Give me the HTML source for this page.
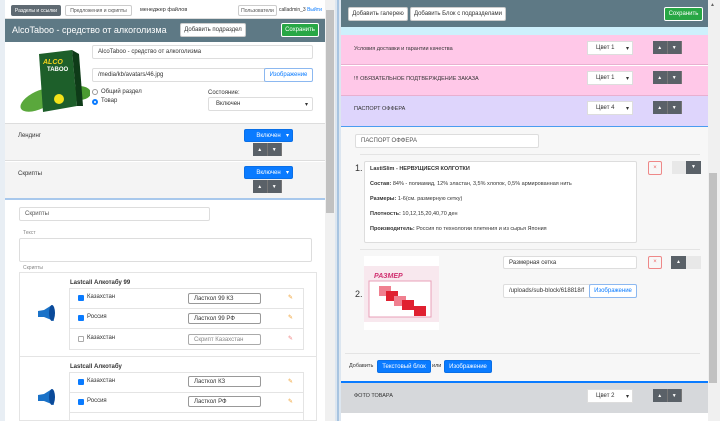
<!DOCTYPE html><html><head><meta charset="utf-8"><style>
*{box-sizing:border-box;margin:0;padding:0}
body{width:720px;height:421px;overflow:hidden;background:#f0f0f0;font-family:"Liberation Sans","DejaVu Sans",sans-serif;font-size:6px;color:#333;position:relative}
.a{position:absolute}
.btn{position:absolute;border:1px solid #ccc;background:#fff;font-size:6px;display:flex;align-items:center;justify-content:center;border-radius:2px;white-space:nowrap}
.inp{position:absolute;border:1px solid #ddd;background:#fff;font-size:6px;display:flex;align-items:center;padding-left:5px;border-radius:2px;white-space:nowrap;overflow:hidden}
.blue{background:#0a7bff;color:#fff;border-color:#0a6fe6}
.ud{position:absolute;width:29px;height:13px;display:flex}
.ud span{flex:1;background:#5a6168;color:#fff;font-size:5px;display:flex;align-items:center;justify-content:center;border-right:1px solid #777}
.sel{position:absolute;width:46px;height:14px;background:#fff;border:1px solid #ddd;font-size:6px;display:flex;align-items:center;padding-left:8px}
.sel:after{content:"▾";position:absolute;right:3px;font-size:6px}
.cb{position:absolute;width:6px;height:6px;background:#0a7bff;border-radius:1px}
.cb0{position:absolute;width:6px;height:6px;border:1px solid #aaa;border-radius:1px;background:#fff}
.pen{position:absolute;color:#f0a030;font-size:6px}
b{font-weight:bold}
</style></head><body>
<!-- left panel -->
<div class="a" style="left:0;top:0;width:5px;height:421px;background:#e8eef4"></div>
<div class="a" style="left:5px;top:0;width:320px;height:421px;background:#fff"></div>
<div class="a" style="left:5px;top:0;width:320px;height:19px;background:#fff;border-bottom:1px solid #ddd"></div>
<div class="btn" style="left:11px;top:5px;width:50px;height:11px;background:#5f6a72;color:#fff;border-color:#5f6a72;font-size:5px">Разделы и ссылки</div>
<div class="btn" style="left:65px;top:5px;width:67px;height:11px;font-size:5px;color:#555">Предложения и скрипты</div>
<div class="a" style="left:140px;top:7px;font-size:5.5px">менеджер файлов</div>
<div class="btn" style="left:238px;top:5px;width:39px;height:11px;font-size:5px;color:#555">Пользователи</div>
<div class="a" style="left:279px;top:7px;font-size:5px">calladmin_3 <span style="color:#0a7bff">Выйти</span></div>
<div class="a" style="left:5px;top:19px;width:320px;height:23px;background:#5e7985"></div>
<div class="a" style="left:12px;top:25px;color:#fff;font-size:9px">AlcoTaboo - средство от алкоголизма</div>
<div class="btn" style="left:180px;top:23px;width:66px;height:14px;font-size:6px">Добавить подраздел</div>
<div class="btn" style="left:281px;top:23px;width:38px;height:14px;background:#28a745;color:#fff;border-color:#fff">Сохранить</div>
<!-- product image -->
<svg class="a" style="left:17px;top:48px" width="73" height="68" viewBox="0 0 73 68"><ellipse cx="22" cy="52" rx="20" ry="9" fill="#5aa83c" transform="rotate(-25 22 52)"/><ellipse cx="62" cy="45" rx="12" ry="7" fill="#4a9a30"/><polygon points="22,6 55,2 60,58 26,64" fill="#1d5f2a"/><polygon points="55,2 62,6 66,58 60,58" fill="#0e3b18"/><text x="26" y="16" font-size="7" fill="#f3d31a" font-style="italic" font-weight="bold">ALCO</text><text x="30" y="23" font-size="6" fill="#fff" font-weight="bold">TABOO</text><circle cx="42" cy="51" r="5" fill="#f3e21a"/></svg>
<div class="inp" style="left:92px;top:45px;width:221px;height:14px">AlcoTaboo - средство от алкоголизма</div>
<div class="inp" style="left:92px;top:68px;width:173px;height:14px;border-radius:2px 0 0 2px">/media/kb/avatars/46.jpg</div>
<div class="btn" style="left:264px;top:68px;width:49px;height:14px;color:#0a7bff;border-color:#8cb8f0">Изображение</div>
<div class="a" style="left:92px;top:89px;width:6px;height:6px;border:1px solid #999;border-radius:50%"></div>
<div class="a" style="left:101px;top:89px;font-size:6px">Общий раздел</div>
<div class="a" style="left:92px;top:99px;width:6px;height:6px;border:2px solid #0a7bff;border-radius:50%"></div>
<div class="a" style="left:101px;top:98px;font-size:6px">Товар</div>
<div class="a" style="left:208px;top:90px;font-size:6px">Состояние:</div>
<div class="inp" style="left:208px;top:97px;width:105px;height:14px;padding-left:7px">Включен<span style="position:absolute;right:4px">▾</span></div>
<div class="a" style="left:5px;top:123px;width:320px;height:38px;background:#f4f4f4;border-top:1px solid #ddd;border-bottom:1px solid #ddd"></div>
<div class="a" style="left:18px;top:133px;font-size:6px">Лендинг</div>
<div class="btn blue" style="left:244px;top:129px;width:49px;height:13px">Включен<span style="position:absolute;right:3px">▾</span></div>
<div class="ud" style="left:253px;top:143px"><span>▲</span><span>▼</span></div>
<div class="a" style="left:5px;top:162px;width:320px;height:37px;background:#f4f4f4;border-bottom:1px solid #ddd"></div>
<div class="a" style="left:18px;top:171px;font-size:6px">Скрипты</div>
<div class="btn blue" style="left:244px;top:166px;width:49px;height:13px">Включен<span style="position:absolute;right:3px">▾</span></div>
<div class="ud" style="left:253px;top:180px"><span>▲</span><span>▼</span></div>
<div class="a" style="left:5px;top:198px;width:320px;height:2px;background:#a8c8ec"></div>
<div class="inp" style="left:19px;top:207px;width:191px;height:14px;color:#555">Скрипты</div>
<div class="a" style="left:23px;top:230px;font-size:5px;color:#888">Текст</div>
<div class="a" style="left:19px;top:238px;width:293px;height:24px;border:1px solid #ddd;border-radius:2px"></div>
<div class="a" style="left:23px;top:265px;font-size:5px;color:#888">Скрипты</div>
<div class="a" style="left:19px;top:272px;width:298px;height:149px;border:1px solid #e4e4e4"></div>
<div class="a" style="left:19px;top:356px;width:298px;height:1px;background:#e4e4e4"></div>
<div class="a" style="left:70px;top:280px;font-size:6px;font-weight:bold">Lastcall Алкотабу 99</div>
<div class="a" style="left:70px;top:364px;font-size:6px;font-weight:bold">Lastcall Алкотабу</div>
<svg class="a" style="left:36px;top:305px" width="20" height="18"><polygon points="2,6 8,5 16,0 18,16 8,12 2,12" fill="#1a72c8"/><ellipse cx="16" cy="8" rx="3" ry="8" fill="#0a4a9a"/></svg>
<svg class="a" style="left:36px;top:389px" width="20" height="18"><polygon points="2,6 8,5 16,0 18,16 8,12 2,12" fill="#1a72c8"/><ellipse cx="16" cy="8" rx="3" ry="8" fill="#0a4a9a"/></svg>
<div class="a" style="left:69px;top:288px;width:235px;height:62px;border:1px solid #e4e4e4"></div>
<div class="a" style="left:69px;top:308px;width:235px;height:1px;background:#e4e4e4"></div>
<div class="a" style="left:69px;top:328px;width:235px;height:1px;background:#e4e4e4"></div>
<div class="a" style="left:69px;top:372px;width:235px;height:49px;border:1px solid #e4e4e4"></div>
<div class="a" style="left:69px;top:392px;width:235px;height:1px;background:#e4e4e4"></div>
<div class="a" style="left:69px;top:412px;width:235px;height:1px;background:#e4e4e4"></div>
<div class="cb" style="left:78px;top:295px"></div><div class="a" style="left:87px;top:294px">Казахстан</div>
<div class="inp" style="left:188px;top:293px;width:73px;height:11px;border-color:#999">Ласткол 99 КЗ</div><div class="pen" style="left:288px;top:294px">✎</div>
<div class="cb" style="left:78px;top:315px"></div><div class="a" style="left:87px;top:314px">Россия</div>
<div class="inp" style="left:188px;top:313px;width:73px;height:11px;border-color:#999">Ласткол 99 РФ</div><div class="pen" style="left:288px;top:314px">✎</div>
<div class="cb0" style="left:78px;top:336px"></div><div class="a" style="left:87px;top:335px">Казахстан</div>
<div class="inp" style="left:188px;top:334px;width:73px;height:11px;border-color:#aaa;color:#888">Скрипт Казахстан</div><div class="pen" style="left:288px;top:335px;color:#f08080">✎</div>
<div class="cb" style="left:78px;top:379px"></div><div class="a" style="left:87px;top:378px">Казахстан</div>
<div class="inp" style="left:188px;top:376px;width:73px;height:11px;border-color:#999">Ласткол КЗ</div><div class="pen" style="left:288px;top:378px">✎</div>
<div class="cb" style="left:78px;top:399px"></div><div class="a" style="left:87px;top:398px">Россия</div>
<div class="inp" style="left:188px;top:396px;width:73px;height:11px;border-color:#999">Ласткол РФ</div><div class="pen" style="left:288px;top:398px">✎</div>
<div class="a" style="left:325px;top:0;width:10px;height:421px;background:#f0f0f0"></div>
<div class="a" style="left:326px;top:10px;width:8px;height:203px;background:#c1c1c1"></div>
<div class="a" style="left:335px;top:0;width:6px;height:421px;background:#dce6f0"></div>
<div class="a" style="left:337px;top:0;width:2px;height:421px;background:#a8c4e0"></div>
<!-- right panel -->
<div class="a" style="left:341px;top:0;width:367px;height:421px;background:#fff"></div>
<div class="a" style="left:341px;top:0;width:367px;height:27px;background:#5e7985"></div>
<div class="btn" style="left:348px;top:7px;width:60px;height:14px">Добавить галерею</div>
<div class="btn" style="left:410px;top:7px;width:96px;height:14px">Добавить Блок с подразделами</div>
<div class="btn" style="left:664px;top:7px;width:39px;height:14px;background:#28a745;color:#fff;border-color:#fff">Сохранить</div>
<div class="a" style="left:341px;top:27px;width:367px;height:8px;background:#cdf0fc"></div>
<div class="a" style="left:341px;top:35px;width:367px;height:30px;background:#ffc8e8;border-bottom:1px solid #e8b0d0"></div>
<div class="a" style="left:354px;top:46px;font-size:5.5px">Условия доставки и гарантии качества</div>
<div class="sel" style="left:587px;top:41px">Цвет 1</div><div class="ud" style="left:653px;top:41px"><span>▲</span><span>▼</span></div>
<div class="a" style="left:341px;top:66px;width:367px;height:30px;background:#ffc8e8;border-bottom:1px solid #e8b0d0"></div>
<div class="a" style="left:354px;top:76px;font-size:5.5px">!!! ОБЯЗАТЕЛЬНОЕ ПОДТВЕРЖДЕНИЕ ЗАКАЗА</div>
<div class="sel" style="left:587px;top:71px">Цвет 1</div><div class="ud" style="left:653px;top:71px"><span>▲</span><span>▼</span></div>
<div class="a" style="left:341px;top:96px;width:367px;height:30px;background:#ded5fc"></div>
<div class="a" style="left:354px;top:106px;font-size:5.5px">ПАСПОРТ ОФФЕРА</div>
<div class="sel" style="left:587px;top:101px">Цвет 4</div><div class="ud" style="left:653px;top:101px"><span>▲</span><span>▼</span></div>
<div class="a" style="left:341px;top:126px;width:367px;height:1px;background:#4a9cf0"></div>
<div class="a" style="left:341px;top:127px;width:367px;height:254px;background:#f7f7f7"></div>
<div class="inp" style="left:355px;top:134px;width:184px;height:14px;color:#555">ПАСПОРТ ОФФЕРА</div>
<div class="a" style="left:360px;top:154px;width:340px;height:1px;background:#e4e4e4"></div>
<div class="a" style="left:355px;top:163px;font-size:9px">1.</div>
<div class="a" style="left:364px;top:161px;width:273px;height:82px;background:#fff;border:1px solid #ddd;border-radius:2px;padding:4px 5px;font-size:5.5px;line-height:7px">
<b>LastiSlim - НЕРВУЩИЕСЯ КОЛГОТКИ</b><div style="height:8px"></div><b>Состав:</b> 84% - полиамид, 12% эластан, 3,5% хлопок, 0,5% армированная нить<div style="height:8px"></div><b>Размеры:</b> 1-6(см. размерную сетку)<div style="height:8px"></div><b>Плотность:</b> 10,12,15,20,40,70 ден<div style="height:8px"></div><b>Производитель:</b> Россия по технологии плетения и из сырья Япония</div>
<div class="a" style="left:648px;top:161px;width:14px;height:14px;border:1px solid #e88;border-radius:2px;color:#e66;font-size:6px;text-align:center;line-height:12px">×</div>
<div class="a" style="left:672px;top:161px;width:15px;height:13px;background:#e8e8e8"></div>
<div class="a" style="left:686px;top:161px;width:15px;height:13px;background:#5a6168;color:#fff;font-size:5px;text-align:center;line-height:13px">▼</div>
<div class="a" style="left:360px;top:249px;width:340px;height:1px;background:#e4e4e4"></div>
<div class="a" style="left:355px;top:289px;font-size:9px">2.</div>
<svg class="a" style="left:364px;top:256px" width="75" height="74"><rect width="75" height="74" fill="#fff"/><rect y="10" width="75" height="56" fill="#f8e8ee"/><text x="10" y="22" font-size="7" fill="#d03070" font-style="italic" font-weight="bold">РАЗМЕР</text><rect x="5" y="25" width="62" height="36" fill="#fff" stroke="#e8a0b8" stroke-width="1"/><rect x="15" y="30" width="12" height="10" fill="#f08090"/><rect x="22" y="35" width="12" height="10" fill="#e02030"/><rect x="30" y="40" width="12" height="10" fill="#f08090"/><rect x="38" y="44" width="12" height="10" fill="#e02030"/><rect x="50" y="50" width="12" height="10" fill="#e02030"/></svg>
<div class="inp" style="left:503px;top:256px;width:134px;height:13px">Размерная сетка</div>
<div class="a" style="left:648px;top:256px;width:14px;height:13px;border:1px solid #e88;border-radius:2px;color:#e66;font-size:6px;text-align:center;line-height:11px">×</div>
<div class="a" style="left:671px;top:256px;width:15px;height:13px;background:#5a6168;color:#fff;font-size:5px;text-align:center;line-height:13px">▲</div>
<div class="a" style="left:686px;top:256px;width:15px;height:13px;background:#e8e8e8"></div>
<div class="inp" style="left:503px;top:284px;width:87px;height:14px;border-radius:2px 0 0 2px">/uploads/sub-block/618818/f</div>
<div class="btn" style="left:589px;top:284px;width:48px;height:14px;color:#0a7bff;border-color:#8cb8f0">Изображение</div>
<div class="a" style="left:345px;top:353px;width:355px;height:1px;background:#e4e4e4"></div>
<div class="a" style="left:349px;top:363px;font-size:5.5px">Добавить</div>
<div class="btn blue" style="left:377px;top:360px;width:54px;height:13px">Текстовый блок</div>
<div class="a" style="left:432px;top:363px;font-size:5.5px">или</div>
<div class="btn blue" style="left:444px;top:360px;width:48px;height:13px">Изображение</div>
<div class="a" style="left:341px;top:381px;width:367px;height:2px;background:#0a7bff"></div>
<div class="a" style="left:341px;top:383px;width:367px;height:30px;background:#d6d8db"></div>
<div class="a" style="left:354px;top:393px;font-size:5.5px">ФОТО ТОВАРА</div>
<div class="sel" style="left:587px;top:389px">Цвет 2</div><div class="ud" style="left:653px;top:389px"><span>▲</span><span>▼</span></div>
<div class="a" style="left:708px;top:0;width:12px;height:421px;background:#f0f0f0"></div>
<div class="a" style="left:709px;top:173px;width:8px;height:210px;background:#c1c1c1"></div>
<div class="a" style="left:710px;top:2px;font-size:5px;color:#666">▲</div>
</body></html>
